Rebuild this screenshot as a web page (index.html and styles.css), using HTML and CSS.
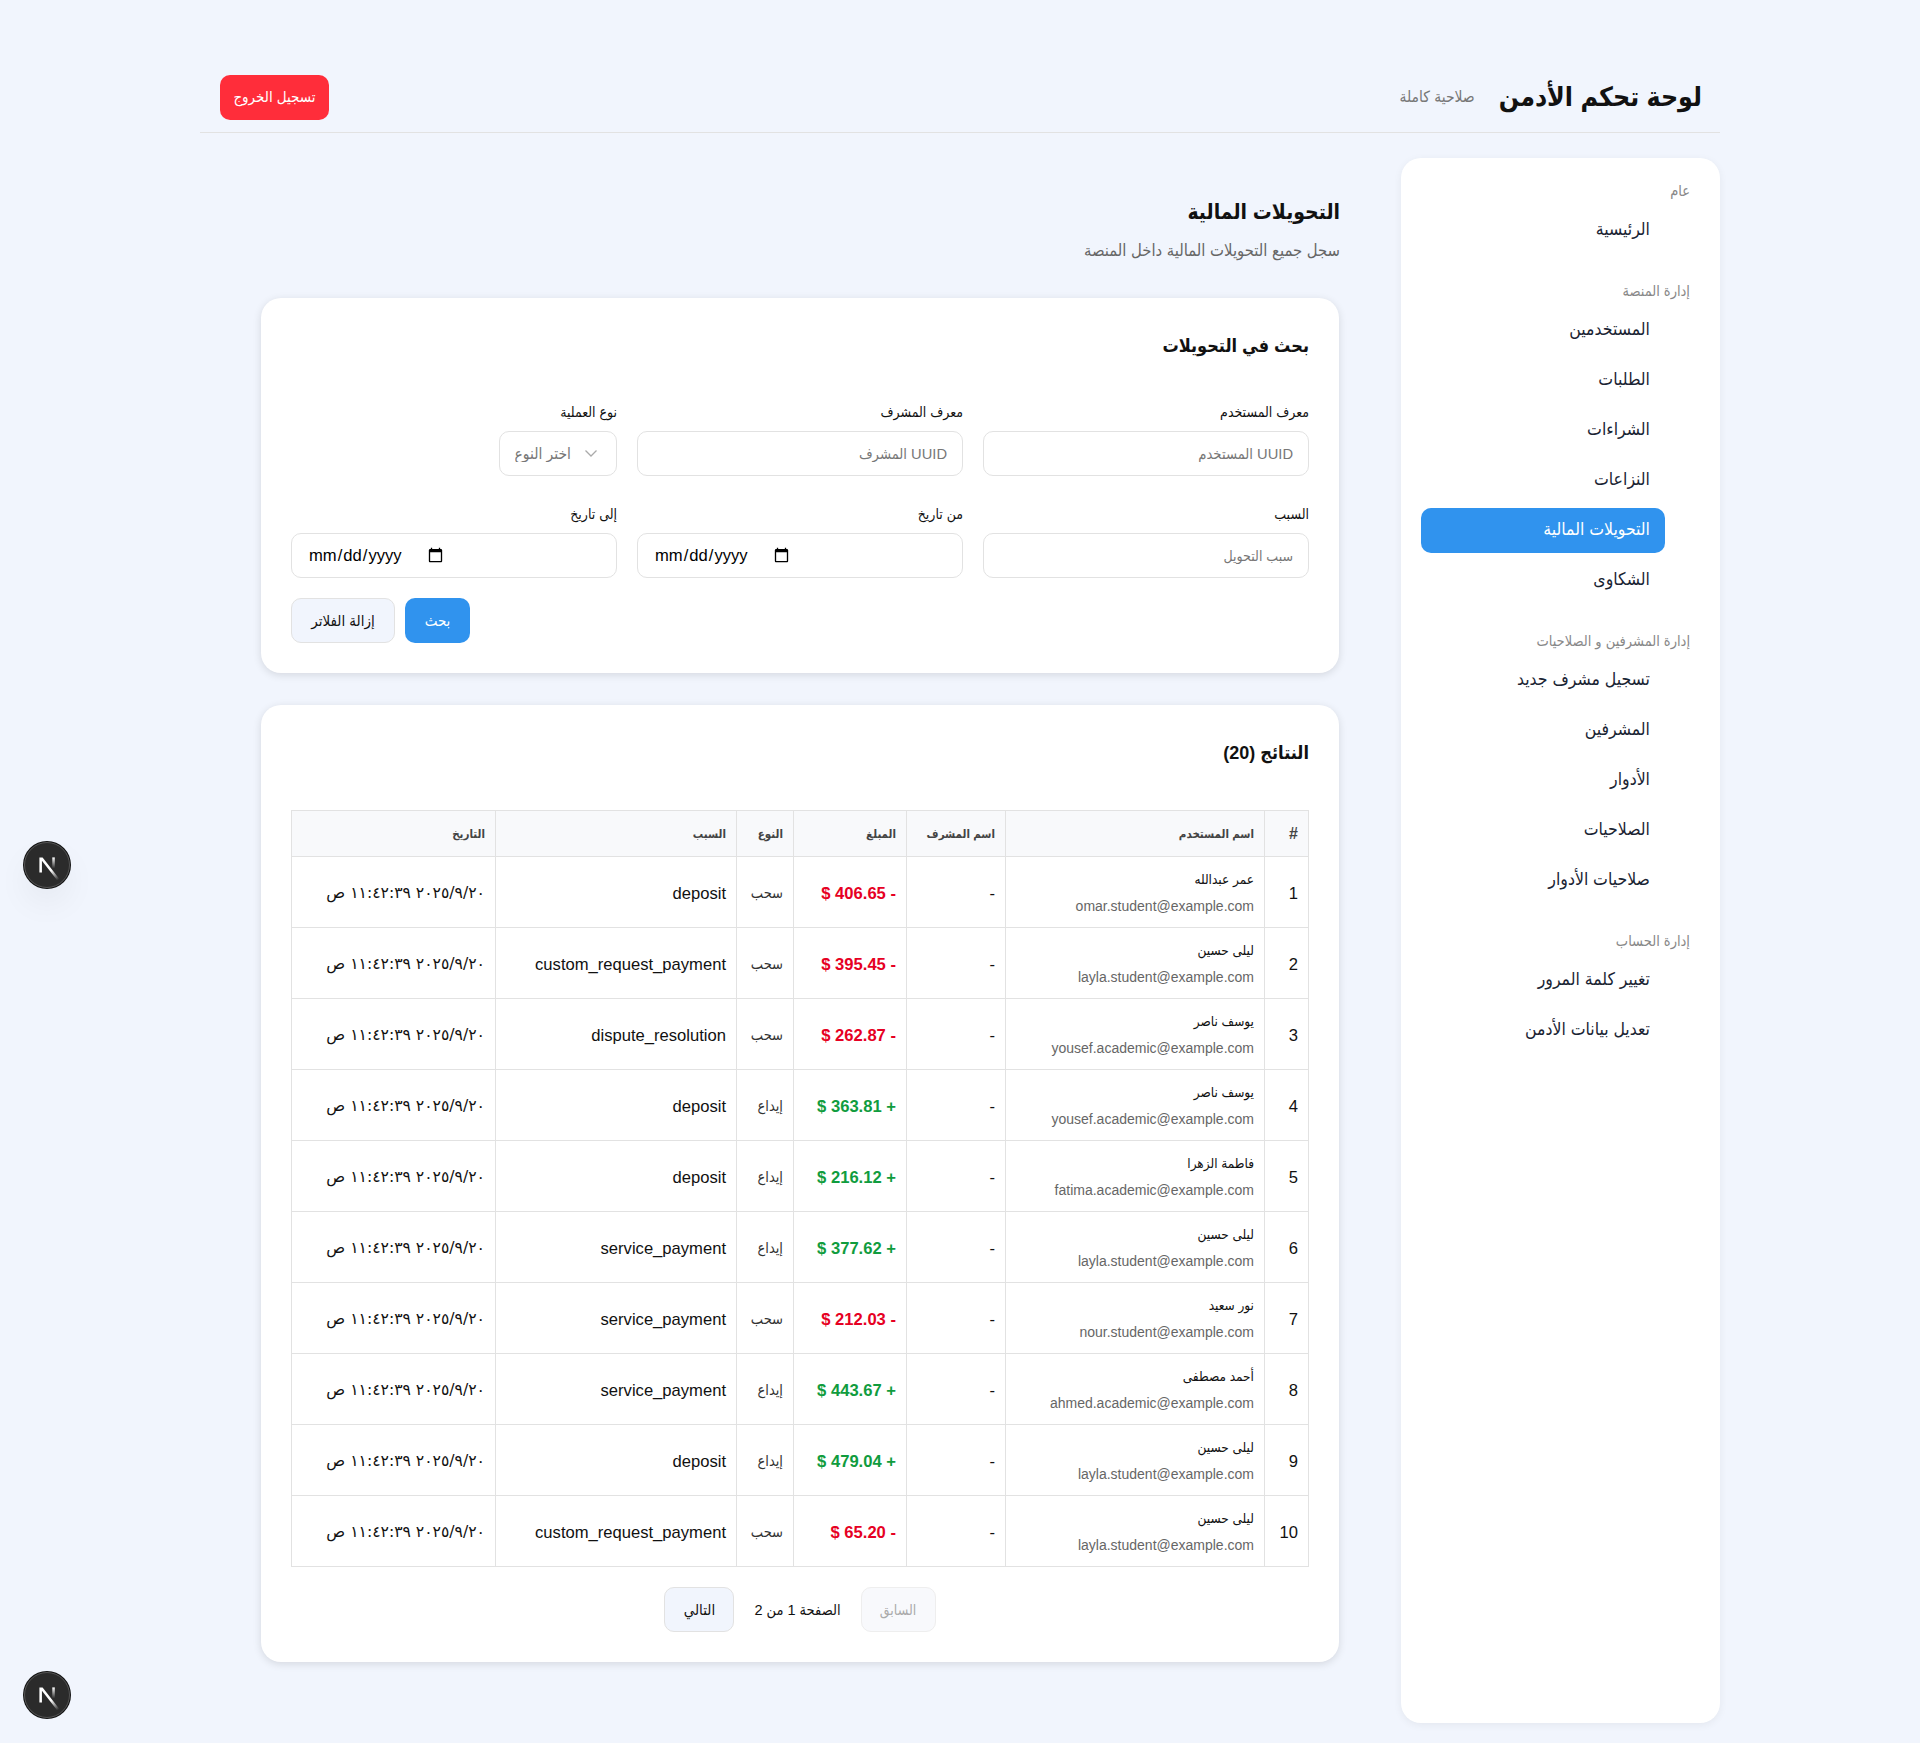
FILE: index.html
```html
<!DOCTYPE html>
<html lang="ar" dir="rtl">
<head>
    <meta charset="UTF-8">
    <title>لوحة تحكم الأدمن</title>
    <link rel="stylesheet" href="styles.css">
</head>
<body>
    <div class="container">
        <header class="topbar">
            <div class="brand">
                <h1>لوحة تحكم الأدمن</h1>
                <span class="role">صلاحية كاملة</span>
            </div>
            <button class="logout">تسجيل الخروج</button>
        </header>

        <div class="layout">
            <aside class="sidebar">
                <div class="nav-group">
                    <div class="nav-label">عام</div>
                    <ul class="nav-list">
                        <li><a class="nav-item">الرئيسية</a></li>
                    </ul>
                </div>
                <div class="nav-group">
                    <div class="nav-label">إدارة المنصة</div>
                    <ul class="nav-list">
                        <li><a class="nav-item">المستخدمين</a></li>
                        <li><a class="nav-item">الطلبات</a></li>
                        <li><a class="nav-item">الشراءات</a></li>
                        <li><a class="nav-item">النزاعات</a></li>
                        <li><a class="nav-item active">التحويلات المالية</a></li>
                        <li><a class="nav-item">الشكاوى</a></li>
                    </ul>
                </div>
                <div class="nav-group">
                    <div class="nav-label">إدارة المشرفين و الصلاحيات</div>
                    <ul class="nav-list">
                        <li><a class="nav-item">تسجيل مشرف جديد</a></li>
                        <li><a class="nav-item">المشرفين</a></li>
                        <li><a class="nav-item">الأدوار</a></li>
                        <li><a class="nav-item">الصلاحيات</a></li>
                        <li><a class="nav-item">صلاحيات الأدوار</a></li>
                    </ul>
                </div>
                <div class="nav-group">
                    <div class="nav-label">إدارة الحساب</div>
                    <ul class="nav-list">
                        <li><a class="nav-item">تغيير كلمة المرور</a></li>
                        <li><a class="nav-item">تعديل بيانات الأدمن</a></li>
                    </ul>
                </div>
            </aside>

            <main class="content">
                <h2 class="page-title">التحويلات المالية</h2>
                <p class="page-sub">سجل جميع التحويلات المالية داخل المنصة</p>

                <section class="card">
                    <h3 class="card-title">بحث في التحويلات</h3>
                    <form class="filters">
                        <div class="field">
                            <label>معرف المستخدم</label>
                            <input type="text" placeholder="UUID المستخدم">
                        </div>
                        <div class="field">
                            <label>معرف المشرف</label>
                            <input type="text" placeholder="UUID المشرف">
                        </div>
                        <div class="field">
                            <label>نوع العملية</label>
                            <div class="select-wrap">
                                <select>
                                    <option>اختر النوع</option>
                                </select>
                                <svg class="chevron" width="14" height="14" viewBox="0 0 14 14"><path d="M1.5 4.5 7 10l5.5-5.5" fill="none" stroke="#aaa" stroke-width="1.3"/></svg>
                            </div>
                        </div>
                        <div class="field">
                            <label>السبب</label>
                            <input class="input-small" type="text" placeholder="سبب التحويل">
                        </div>
                        <div class="field">
                            <label>من تاريخ</label>
                            <input type="date">
                        </div>
                        <div class="field">
                            <label>إلى تاريخ</label>
                            <input type="date">
                        </div>
                    </form>
                    <div class="filter-actions">
                        <button class="btn btn-primary" type="button">بحث</button>
                        <button class="btn btn-light btn-clear" type="button">إزالة الفلاتر</button>
                    </div>
                </section>

                <section class="card results">
                    <h3 class="card-title">النتائج (20)</h3>
                    <table class="data-table">
                        <colgroup>
                            <col class="c-num"><col class="c-user"><col class="c-sup"><col class="c-amount"><col class="c-type"><col class="c-reason"><col>
                        </colgroup>
                        <thead>
                            <tr>
                                <th class="th-num">#</th>
                                <th>اسم المستخدم</th>
                                <th>اسم المشرف</th>
                                <th>المبلغ</th>
                                <th>النوع</th>
                                <th>السبب</th>
                                <th>التاريخ</th>
                            </tr>
                        </thead>
                        <tbody>
                            <tr>
                                <td class="plain">1</td>
                                <td class="user"><div class="u-name">عمر عبدالله</div><div class="u-mail">omar.student@example.com</div></td>
                                <td class="plain">-</td>
                                <td class="plain out">- 406.65 $</td>
                                <td class="kind">سحب</td>
                                <td class="plain">deposit</td>
                                <td class="when">٢٠٢٥/٩/٢٠ ١١:٤٢:٣٩ ص</td>
                            </tr>
                            <tr>
                                <td class="plain">2</td>
                                <td class="user"><div class="u-name">ليلى حسين</div><div class="u-mail">layla.student@example.com</div></td>
                                <td class="plain">-</td>
                                <td class="plain out">- 395.45 $</td>
                                <td class="kind">سحب</td>
                                <td class="plain">custom_request_payment</td>
                                <td class="when">٢٠٢٥/٩/٢٠ ١١:٤٢:٣٩ ص</td>
                            </tr>
                            <tr>
                                <td class="plain">3</td>
                                <td class="user"><div class="u-name">يوسف ناصر</div><div class="u-mail">yousef.academic@example.com</div></td>
                                <td class="plain">-</td>
                                <td class="plain out">- 262.87 $</td>
                                <td class="kind">سحب</td>
                                <td class="plain">dispute_resolution</td>
                                <td class="when">٢٠٢٥/٩/٢٠ ١١:٤٢:٣٩ ص</td>
                            </tr>
                            <tr>
                                <td class="plain">4</td>
                                <td class="user"><div class="u-name">يوسف ناصر</div><div class="u-mail">yousef.academic@example.com</div></td>
                                <td class="plain">-</td>
                                <td class="plain in">+ 363.81 $</td>
                                <td class="kind">إيداع</td>
                                <td class="plain">deposit</td>
                                <td class="when">٢٠٢٥/٩/٢٠ ١١:٤٢:٣٩ ص</td>
                            </tr>
                            <tr>
                                <td class="plain">5</td>
                                <td class="user"><div class="u-name">فاطمة الزهرا</div><div class="u-mail">fatima.academic@example.com</div></td>
                                <td class="plain">-</td>
                                <td class="plain in">+ 216.12 $</td>
                                <td class="kind">إيداع</td>
                                <td class="plain">deposit</td>
                                <td class="when">٢٠٢٥/٩/٢٠ ١١:٤٢:٣٩ ص</td>
                            </tr>
                            <tr>
                                <td class="plain">6</td>
                                <td class="user"><div class="u-name">ليلى حسين</div><div class="u-mail">layla.student@example.com</div></td>
                                <td class="plain">-</td>
                                <td class="plain in">+ 377.62 $</td>
                                <td class="kind">إيداع</td>
                                <td class="plain">service_payment</td>
                                <td class="when">٢٠٢٥/٩/٢٠ ١١:٤٢:٣٩ ص</td>
                            </tr>
                            <tr>
                                <td class="plain">7</td>
                                <td class="user"><div class="u-name">نور سعيد</div><div class="u-mail">nour.student@example.com</div></td>
                                <td class="plain">-</td>
                                <td class="plain out">- 212.03 $</td>
                                <td class="kind">سحب</td>
                                <td class="plain">service_payment</td>
                                <td class="when">٢٠٢٥/٩/٢٠ ١١:٤٢:٣٩ ص</td>
                            </tr>
                            <tr>
                                <td class="plain">8</td>
                                <td class="user"><div class="u-name">أحمد مصطفى</div><div class="u-mail">ahmed.academic@example.com</div></td>
                                <td class="plain">-</td>
                                <td class="plain in">+ 443.67 $</td>
                                <td class="kind">إيداع</td>
                                <td class="plain">service_payment</td>
                                <td class="when">٢٠٢٥/٩/٢٠ ١١:٤٢:٣٩ ص</td>
                            </tr>
                            <tr>
                                <td class="plain">9</td>
                                <td class="user"><div class="u-name">ليلى حسين</div><div class="u-mail">layla.student@example.com</div></td>
                                <td class="plain">-</td>
                                <td class="plain in">+ 479.04 $</td>
                                <td class="kind">إيداع</td>
                                <td class="plain">deposit</td>
                                <td class="when">٢٠٢٥/٩/٢٠ ١١:٤٢:٣٩ ص</td>
                            </tr>
                            <tr>
                                <td class="plain">10</td>
                                <td class="user"><div class="u-name">ليلى حسين</div><div class="u-mail">layla.student@example.com</div></td>
                                <td class="plain">-</td>
                                <td class="plain out">- 65.20 $</td>
                                <td class="kind">سحب</td>
                                <td class="plain">custom_request_payment</td>
                                <td class="when">٢٠٢٥/٩/٢٠ ١١:٤٢:٣٩ ص</td>
                            </tr>
                        </tbody>
                    </table>
                    <div class="pager">
                        <button class="btn page-btn page-prev" disabled>السابق</button>
                        <span class="page-info">الصفحة 1 من 2</span>
                        <button class="btn page-btn page-next btn-light">التالي</button>
                    </div>
                </section>
            </main>
        </div>
    </div>

    <div class="dev-badge badge-mid">
        <svg width="38" height="38" viewBox="0 0 180 180"><defs><linearGradient id="nfade" x1="109" y1="116" x2="144" y2="160" gradientUnits="userSpaceOnUse"><stop stop-color="#fff"/><stop offset="1" stop-color="#fff" stop-opacity="0"/></linearGradient><linearGradient id="nfade2" x1="121" y1="54" x2="120" y2="106" gradientUnits="userSpaceOnUse"><stop stop-color="#fff"/><stop offset="1" stop-color="#fff" stop-opacity="0"/></linearGradient></defs><path d="M149.5 157.5 69.1 54H54v72h12V69.4l73.9 95.5c3.4-2.2 6.6-4.7 9.6-7.4z" fill="url(#nfade)"/><rect x="115" y="54" width="12" height="72" fill="url(#nfade2)"/></svg>
    </div>
    <div class="dev-badge badge-low">
        <svg width="38" height="38" viewBox="0 0 180 180"><path d="M149.5 157.5 69.1 54H54v72h12V69.4l73.9 95.5c3.4-2.2 6.6-4.7 9.6-7.4z" fill="url(#nfade)"/><rect x="115" y="54" width="12" height="72" fill="url(#nfade2)"/></svg>
    </div>
</body>
</html>
```

FILE: styles.css
```css
* {
    box-sizing: border-box;
}
body {
    margin: 0;
    background-color: #f1f5fd;
    color: #111;
    font-family: "Liberation Sans", "DejaVu Sans Condensed", "DejaVu Sans", sans-serif;
    font-size: 16px;
}
.container {
    width: 1520px;
    height: 1743px;
    margin: 0 auto;
    padding-top: 75px;
}
.topbar {
    display: flex;
    justify-content: space-between;
    align-items: center;
    height: 58px;
    padding: 0 18px 13px 20px;
    border-bottom: 1px solid #e2e2e2;
}
.brand {
    display: flex;
    align-items: center;
    gap: 24px;
}
.brand h1 {
    margin: 0;
    font-size: 26.5px;
    font-weight: bold;
}
.role {
    color: #777;
    font-size: 15.5px;
}
.logout {
    width: 109px;
    height: 45px;
    background-color: #ff2d3a;
    color: white;
    border: none;
    border-radius: 10px;
    font: inherit;
    font-size: 15px;
}
.layout {
    display: flex;
    margin-top: 25px;
}
.sidebar {
    width: 319px;
    height: 1565px;
    padding: 25px 20px;
    background-color: #fff;
    border-radius: 20px;
    box-shadow: 0 2px 8px rgba(0, 0, 0, 0.06);
}
.nav-group {
    margin-bottom: 30px;
}
.nav-label {
    height: 17px;
    margin: 0 10px 8px 0;
    color: #888;
    font-size: 14.5px;
}
.nav-list {
    display: flex;
    flex-direction: column;
    gap: 5px;
    margin: 0;
    padding: 0 35px 0 0;
    list-style: none;
}
.nav-item {
    display: block;
    height: 45px;
    padding: 0 15px;
    border-radius: 10px;
    color: #1a2433;
    font-size: 17.5px;
    line-height: 43px;
}
.nav-item.active {
    background-color: #3093ee;
    color: #fff;
}
.content {
    flex: 1;
    padding-left: 61px;
    padding-right: 62px;
}
.page-title {
    margin: 39px -1px 0 0;
    font-size: 21px;
    font-weight: bold;
    line-height: 30px;
}
.page-sub {
    margin: 13px -1px 38px 0;
    color: #666;
    font-size: 16.5px;
    line-height: 20px;
}
.card {
    padding: 30px;
    background-color: #fff;
    border-radius: 20px;
    box-shadow: 0 2px 8px rgba(0, 0, 0, 0.12);
}
.card-title {
    margin: 0 0 41px;
    font-size: 18px;
    font-weight: bold;
    line-height: 36px;
}
.filters {
    display: grid;
    grid-template-columns: repeat(3, 1fr);
    gap: 31px 20px;
}
.field label {
    display: block;
    height: 17px;
    margin-bottom: 9px;
    font-size: 14px;
    line-height: 15px;
}
.field input,
.field select {
    display: block;
    width: 100%;
    height: 45px;
    padding: 0 15px;
    background-color: #fff;
    border: 1px solid #e2e2e2;
    border-radius: 10px;
    font: inherit;
}
.field input::placeholder {
    color: #777;
    font-size: 14.7px;
}
.field .input-small::placeholder {
    font-size: 14px;
}
.field input[type="date"] {
    padding: 0 16px;
    font-size: 16.6px;
}
.field input::-webkit-datetime-edit {
    flex: 0 0 auto;
}
.select-wrap {
    position: relative;
    width: 118px;
}
.field select {
    appearance: none;
    color: #777;
    font-size: 15.5px;
    padding-right: 45px;
}
.chevron {
    position: absolute;
    top: 15px;
    right: 19px;
}
.filter-actions {
    display: flex;
    justify-content: flex-end;
    gap: 10px;
    margin-top: 20px;
}
.btn {
    height: 45px;
    padding: 0;
    border: 1px solid transparent;
    border-radius: 10px;
    font: inherit;
    font-size: 15px;
}
.btn-primary {
    width: 65px;
    background-color: #3093ee;
    color: #fff;
}
.btn-clear {
    width: 104px;
}
.btn-light {
    background-color: #f1f5fd;
    border-color: #e2e2e2;
    color: #111;
}
.results {
    margin-top: 32px;
}
.results .card-title {
    margin-bottom: 39px;
}
.data-table {
    width: 1018px;
    border-collapse: collapse;
    table-layout: fixed;
}
.c-num { width: 44px; }
.c-user { width: 259px; }
.c-sup { width: 99px; }
.c-amount { width: 113px; }
.c-type { width: 57px; }
.c-reason { width: 241px; }
.data-table th,
.data-table td {
    padding: 0 10px;
    border: 1px solid #e2e2e2;
    text-align: right;
}
.data-table th {
    height: 46px;
    background-color: #f8f9fb;
    color: #444;
    font-size: 11.5px;
    font-weight: bold;
}
.data-table .th-num {
    font-size: 16px;
}
.data-table td {
    height: 71px;
    font-size: 16.6px;
}
.data-table .plain {
    padding-top: 3px;
}
.u-name {
    font-size: 13.5px;
    margin-bottom: 11px;
}
.u-mail {
    color: #666;
    font-size: 14px;
}
.out {
    color: #e60023;
    font-weight: bold;
}
.in {
    color: #109c3e;
    font-weight: bold;
}
.data-table .kind {
    padding-top: 2px;
    font-size: 14.5px;
    color: #333;
}
.data-table .when {
    padding-top: 2px;
    font-family: "DejaVu Sans", sans-serif;
    font-size: 15.6px;
}
.pager {
    display: flex;
    justify-content: center;
    align-items: center;
    gap: 20px;
    margin-top: 20px;
}
.page-prev {
    width: 75px;
    font-size: 14px;
}
.page-next {
    width: 70px;
}
.page-btn:disabled {
    background-color: #f8f9fc;
    border-color: #eee;
    color: #aaa;
}
.page-info {
    font-size: 14.5px;
}
.dev-badge {
    position: fixed;
    left: 24px;
    display: flex;
    align-items: center;
    justify-content: center;
    width: 46px;
    height: 46px;
    background-color: #2b2b2b;
    border: 1px solid #555;
    border-radius: 50%;
    box-shadow: 0 0 0 1px #111;
}
.badge-mid {
    top: 842px;
    box-shadow: 0 0 0 1px #111, 0 16px 32px rgba(0, 0, 0, 0.05);
}
.badge-low {
    top: 1672px;
}
```
